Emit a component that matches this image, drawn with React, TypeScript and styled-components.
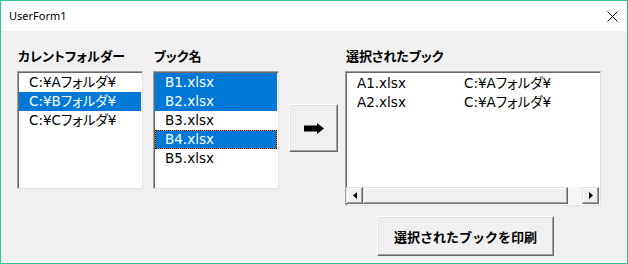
import styled, { createGlobalStyle } from "styled-components";

const GlobalStyle = createGlobalStyle`
    html, body {
        margin: 0;
        padding: 0;
        background: #ffffff;
    }
`;

const Window = styled.div`
    width: 628px;
    height: 264px;
    box-sizing: border-box;
    border: 1px solid #2fc690;
    display: flex;
    flex-direction: column;
    background: #f0f0f0;
    font-family: "DejaVu Sans", "Noto Sans CJK JP", sans-serif;
    font-feature-settings: "palt" 1;
    color: #000;
`;

const TitleBar = styled.div`
    height: 30px;
    flex: none;
    background: #ffffff;
    display: flex;
    align-items: center;
    justify-content: space-between;
    padding: 0 9px 0 8px;
`;

const Title = styled.span`
    font-family: "Noto Sans", sans-serif;
    font-size: 11px;
    margin-top: -1px;
`;

const Body = styled.div`
    flex: 1;
    display: flex;
    align-items: flex-start;
    padding: 16px 0 0 16px;
`;

const Column = styled.div<{ $width: number }>`
    width: ${p => p.$width}px;
    display: flex;
    flex-direction: column;
`;

const Label = styled.div`
    height: 18px;
    line-height: 18px;
    margin-bottom: 6px;
    font-family: "Noto Sans CJK JP", sans-serif;
    font-weight: 700;
    font-size: 13px;
    white-space: nowrap;
    padding-left: 1px;
`;

const ListBox = styled.div<{ $height: number }>`
    height: ${p => p.$height}px;
    box-sizing: border-box;
    background: #ffffff;
    border: 1px solid;
    border-color: #a0a0a0 #e3e3e3 #e3e3e3 #a0a0a0;
    box-shadow: inset 1px 1px 0 #696969;
    padding: 1px 1px 0 1px;
    display: flex;
    flex-direction: column;
    overflow: hidden;
`;

const Row = styled.div<{ $selected?: boolean; $focused?: boolean }>`
    height: 19px;
    flex: none;
    box-sizing: border-box;
    line-height: 19px;
    font-size: 13.5px;
    padding-left: 10px;
    white-space: nowrap;
    color: ${p => (p.$selected ? "#ffffff" : "#000000")};
    background: ${p => (p.$selected ? "#0078d7" : "transparent")};
    ${p =>
        p.$focused &&
        `
        border: 1px dotted #000;
        line-height: 17px;
        padding-left: 9px;
        background: linear-gradient(#0078d7, #0078d7) padding-box,
            linear-gradient(#f08a1c, #f08a1c) border-box;
    `}
`;

const Rows = styled.div`
    flex: 1;
    padding-top: 1px;
`;

const GridRow = styled.div`
    height: 19px;
    line-height: 19px;
    font-size: 13.5px;
    display: grid;
    grid-template-columns: 107px auto;
    padding-left: 10px;
    white-space: nowrap;
`;

const RaisedButton = styled.button<{ $width: number; $height: number }>`
    width: ${p => p.$width}px;
    height: ${p => p.$height}px;
    box-sizing: border-box;
    background: #f0f0f0;
    border: 1px solid;
    border-color: #ffffff #696969 #696969 #ffffff;
    box-shadow: inset -1px -1px 0 #a0a0a0, inset 1px 1px 0 #e3e3e3;
    padding: 0;
    display: flex;
    align-items: center;
    justify-content: center;
    cursor: default;
`;

const ArrowButton = styled(RaisedButton)`
    margin: 57px 7px 0 10px;
`;

const PrintButton = styled(RaisedButton)`
    margin: 10px 0 0 32px;
    font-family: "Noto Sans CJK JP", sans-serif;
    font-weight: 700;
    font-size: 13px;
    color: #000;
    padding-top: 1px;
`;

const ScrollBar = styled.div`
    height: 17px;
    flex: none;
    display: flex;
    margin: 0 0 1px -1px;
`;

const ScrollButton = styled.div<{ $width?: number }>`
    width: ${p => p.$width ?? 17}px;
    height: 17px;
    box-sizing: border-box;
    background: #f0f0f0;
    border: 1px solid;
    border-color: #e3e3e3 #696969 #696969 #e3e3e3;
    box-shadow: inset -1px -1px 0 #a0a0a0, inset 1px 1px 0 #ffffff;
    display: flex;
    align-items: center;
    justify-content: center;
    flex: none;
`;

const Track = styled.div`
    flex: 1;
    background-color: #ffffff;
    background-image: repeating-conic-gradient(#f0f0f0 0 25%, #ffffff 0 50%);
    background-size: 2px 2px;
`;

const Triangle = ({ dir }: { dir: "left" | "right" }) => (
    <svg width="4" height="7" viewBox="0 0 4 7">
        <polygon points={dir === "left" ? "4,0 4,7 0,3.5" : "0,0 0,7 4,3.5"} fill="#000" />
    </svg>
);

const folders = ["C:¥Aフォルダ¥", "C:¥Bフォルダ¥", "C:¥Cフォルダ¥"];
const books = ["B1.xlsx", "B2.xlsx", "B3.xlsx", "B4.xlsx", "B5.xlsx"];
const chosen = [
    ["A1.xlsx", "C:¥Aフォルダ¥"],
    ["A2.xlsx", "C:¥Aフォルダ¥"],
];

export default function App()
{
    return (
        <>
            <GlobalStyle />
            <Window>
                <TitleBar>
                    <Title>UserForm1</Title>
                    <svg width="11" height="11" viewBox="0 0 11 11">
                        <path d="M0.5 0.5 L10.5 10.5 M10.5 0.5 L0.5 10.5" stroke="#000" strokeWidth="1" />
                    </svg>
                </TitleBar>
                <Body>
                    <Column $width={126}>
                        <Label>カレントフォルダー</Label>
                        <ListBox $height={118}>
                            {folders.map((f, i) => (
                                <Row key={f} $selected={i === 1}>{f}</Row>
                            ))}
                        </ListBox>
                    </Column>
                    <Column $width={126} style={{ marginLeft: 10 }}>
                        <Label>ブック名</Label>
                        <ListBox $height={118}>
                            {books.map((b, i) => (
                                <Row key={b} $selected={i === 0 || i === 1 || i === 3} $focused={i === 3}>{b}</Row>
                            ))}
                        </ListBox>
                    </Column>
                    <ArrowButton $width={49} $height={48}>
                        <svg width="20" height="11" viewBox="0 0 20 11">
                            <polygon points="0,2.5 13,2.5 13,0 20,5.5 13,11 13,8.5 0,8.5" fill="#000" />
                        </svg>
                    </ArrowButton>
                    <Column $width={256}>
                        <Label>選択されたブック</Label>
                        <ListBox $height={135}>
                            <Rows>
                                {chosen.map(([n, p]) => (
                                    <GridRow key={n}>
                                        <span>{n}</span>
                                        <span>{p}</span>
                                    </GridRow>
                                ))}
                            </Rows>
                            <ScrollBar>
                                <ScrollButton><Triangle dir="left" /></ScrollButton>
                                <ScrollButton $width={205} />
                                <Track />
                                <ScrollButton><Triangle dir="right" /></ScrollButton>
                            </ScrollBar>
                        </ListBox>
                        <PrintButton $width={177} $height={40}>選択されたブックを印刷</PrintButton>
                    </Column>
                </Body>
            </Window>
        </>
    );
}
